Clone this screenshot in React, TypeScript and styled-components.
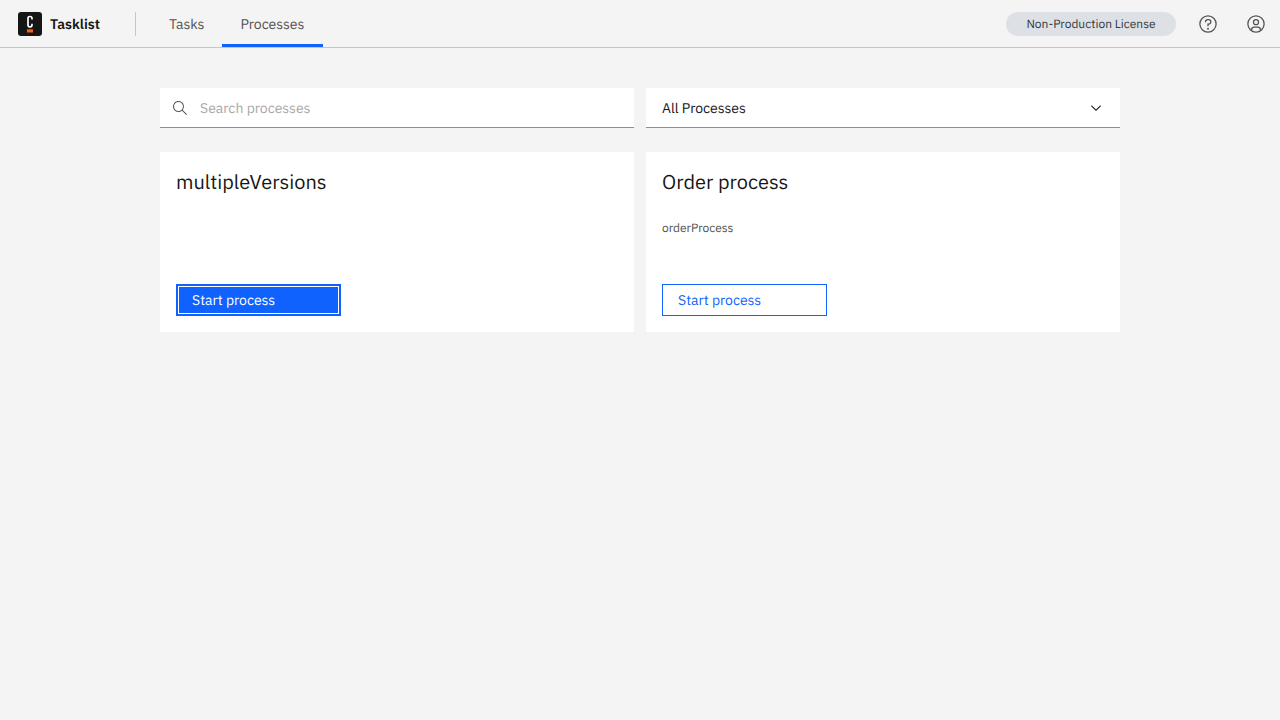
import React from "react";
import styled, { createGlobalStyle, css } from "styled-components";

const GlobalStyle = createGlobalStyle`
  *, *::before, *::after { box-sizing: border-box; }
  body {
    margin: 0;
    background: #f4f4f4;
    color: #161616;
    font-family: "IBM Plex Sans", Inter, sans-serif;
    font-size: 14px;
    line-height: 18px;
    text-rendering: geometricPrecision;
  }
  button, input, select { font: inherit; border-radius: 0; text-rendering: inherit; }
`;

const Header = styled.header`
  display: flex;
  align-items: center;
  height: 48px;
  box-shadow: inset 0 -1px #c6c6c6;
`;

const Brand = styled.a`
  display: flex;
  align-items: center;
  gap: 8px;
  min-width: 135px;
  padding-left: 18px;
  color: #161616;
  font-weight: 600;
  text-decoration: none;
`;

const Divider = styled.span`
  width: 1px;
  height: 24px;
  margin-right: 15px;
  background: #c6c6c6;
`;

const Nav = styled.nav`
  display: flex;
  align-self: stretch;
  padding-bottom: 1px;
`;

const NavLink = styled.a<{ $active?: boolean }>`
  display: flex;
  align-items: center;
  min-width: ${(p) => (p.$active ? "101px" : "71px")};
  padding: 4px 18px 0;
  border-bottom: 3px solid ${(p) => (p.$active ? "#0f62fe" : "transparent")};
  color: #525252;
  text-decoration: none;
`;

const Actions = styled.div`
  display: flex;
  align-items: center;
  margin-left: auto;
`;

const LicenseTag = styled.span`
  display: flex;
  align-items: center;
  justify-content: center;
  min-width: 170px;
  height: 24px;
  margin-right: 8px;
  padding: 2px 16px 0;
  border-radius: 12px;
  background: #dde1e6;
  color: #343a3f;
  font-size: 12px;
  line-height: 16px;
`;

const IconButton = styled.button`
  display: flex;
  align-items: center;
  justify-content: center;
  width: 48px;
  height: 48px;
  padding: 0;
  border: 0;
  background: transparent;
  color: #525252;
`;

const Main = styled.main`
  max-width: 960px;
  margin: 0 auto;
  padding: 40px 0;
`;

const Grid = styled.div`
  display: grid;
  grid-template-columns: 1fr 1fr;
  gap: 24px 12px;
`;

const Field = styled.label<{ $start: string; $end: string }>`
  display: flex;
  align-items: center;
  height: 40px;
  padding-left: ${(p) => p.$start};
  padding-right: ${(p) => p.$end};
  box-shadow: inset 0 -1px #8d8d8d;
  background: #fff;
  color: #161616;
`;

const fieldControl = css`
  flex: 1;
  min-width: 0;
  height: 100%;
  padding: 0;
  border: 0;
  outline: 0;
  background: transparent;
  color: #161616;
`;

const SearchInput = styled.input`
  ${fieldControl}
  margin-left: 12px;
  &::placeholder { color: #a8a8a8; opacity: 1; }
`;

const FilterSelect = styled.select`
  ${fieldControl}
  appearance: none;
  margin-right: -16px;
`;

const Chevron = styled.svg`
  pointer-events: none;
`;

const Card = styled.article`
  display: flex;
  flex-direction: column;
  align-items: flex-start;
  min-height: 180px;
  padding: 16px;
  background: #fff;
`;

const CardTitle = styled.h2`
  margin: 0;
  font-size: 20px;
  line-height: 28px;
  font-weight: 400;
`;

const CardId = styled.p`
  margin: 24px 0 0;
  color: #525252;
  font-size: 12px;
  line-height: 18px;
`;

const StartButton = styled.button<{ $primary?: boolean }>`
  width: 165px;
  height: 32px;
  margin-top: auto;
  padding: 0 15px;
  border: 1px solid #0f62fe;
  background: ${(p) => (p.$primary ? "#0f62fe" : "transparent")};
  box-shadow: ${(p) => (p.$primary ? "inset 0 0 0 1px #0f62fe, inset 0 0 0 2px #fff" : "none")};
  color: ${(p) => (p.$primary ? "#fff" : "#0f62fe")};
  text-align: left;
`;

const Logo = () => (
  <svg width="24" height="24" viewBox="0 0 24 24" aria-hidden="true">
    <rect width="24" height="24" rx="3" fill="#161616" />
    <path
      d="M14 7.6V6.2a1.7 1.7 0 0 0-1.7-1.7h-.6A1.7 1.7 0 0 0 10 6.2v6.9a1.7 1.7 0 0 0 1.7 1.7h.6a1.7 1.7 0 0 0 1.7-1.7v-1.4"
      fill="none"
      stroke="#fff"
      strokeWidth="1.7"
    />
    <rect x="9" y="17.3" width="6" height="3.2" fill="#fc5d0d" />
  </svg>
);

const SearchIcon = () => (
  <svg width="16" height="16" viewBox="0 0 16 16" fill="#525252" aria-hidden="true">
    <path d="M15 14.3L10.7 10c1.9-2.3 1.6-5.8-.7-7.7S4.2.7 2.3 3 .7 8.8 3 10.7c2 1.7 5 1.7 7 0l4.3 4.3.7-.7zM2 6.5C2 4 4 2 6.5 2S11 4 11 6.5 9 11 6.5 11 2 9 2 6.5z" />
  </svg>
);

const HelpIcon = () => (
  <svg width="20" height="20" viewBox="0 0 32 32" fill="currentColor" aria-hidden="true">
    <path d="M16,2A14,14,0,1,0,30,16,14,14,0,0,0,16,2Zm0,26A12,12,0,1,1,28,16,12,12,0,0,1,16,28Z" />
    <circle cx="16" cy="23.5" r="1.5" />
    <path d="M17,8H15.5A4.49,4.49,0,0,0,11,12.5V13h2v-.5A2.5,2.5,0,0,1,15.5,10H17a2.5,2.5,0,0,1,0,5H15v4.5h2V17a4.5,4.5,0,0,0,0-9Z" />
  </svg>
);

const UserIcon = () => (
  <svg width="20" height="20" viewBox="0 0 32 32" fill="currentColor" aria-hidden="true">
    <path d="M16,8a5,5,0,1,0,5,5A5,5,0,0,0,16,8Zm0,8a3,3,0,1,1,3-3A3.0034,3.0034,0,0,1,16,16Z" />
    <path d="M16,2A14,14,0,1,0,30,16,14.0158,14.0158,0,0,0,16,2ZM10,26.3765V25a3.0033,3.0033,0,0,1,3-3h6a3.0033,3.0033,0,0,1,3,3v1.3765a11.8989,11.8989,0,0,1-12,0Zm13.9925-1.4507A5.0016,5.0016,0,0,0,19,20H13a5.0016,5.0016,0,0,0-4.9925,4.9258,12,12,0,1,1,15.985,0Z" />
  </svg>
);

type Process = { name: string; id?: string; primary?: boolean };

const processes: Process[] = [
  { name: "multipleVersions", primary: true },
  { name: "Order process", id: "orderProcess" },
];

export default function App() {
  return (
    <>
      <GlobalStyle />
      <Header>
        <Brand href="#">
          <Logo />
          Tasklist
        </Brand>
        <Divider />
        <Nav aria-label="Main">
          <NavLink href="#tasks">Tasks</NavLink>
          <NavLink href="#processes" $active aria-current="page">
            Processes
          </NavLink>
        </Nav>
        <Actions>
          <LicenseTag>Non-Production License</LicenseTag>
          <IconButton type="button" aria-label="Help">
            <HelpIcon />
          </IconButton>
          <IconButton type="button" aria-label="Account">
            <UserIcon />
          </IconButton>
        </Actions>
      </Header>
      <Main>
        <Grid>
          <Field $start="12px" $end="16px">
            <SearchIcon />
            <SearchInput type="search" placeholder="Search processes" aria-label="Search processes" />
          </Field>
          <Field $start="16px" $end="16px">
            <FilterSelect aria-label="Filter processes">
              <option>All Processes</option>
            </FilterSelect>
            <Chevron width="16" height="16" viewBox="0 0 16 16" fill="#161616" aria-hidden="true">
              <path d="M8 11L3 6 3.7 5.3 8 9.6 12.3 5.3 13 6z" />
            </Chevron>
          </Field>
          {processes.map((p) => (
            <Card key={p.name}>
              <CardTitle>{p.name}</CardTitle>
              {p.id && <CardId>{p.id}</CardId>}
              <StartButton type="button" $primary={p.primary}>
                Start process
              </StartButton>
            </Card>
          ))}
        </Grid>
      </Main>
    </>
  );
}
